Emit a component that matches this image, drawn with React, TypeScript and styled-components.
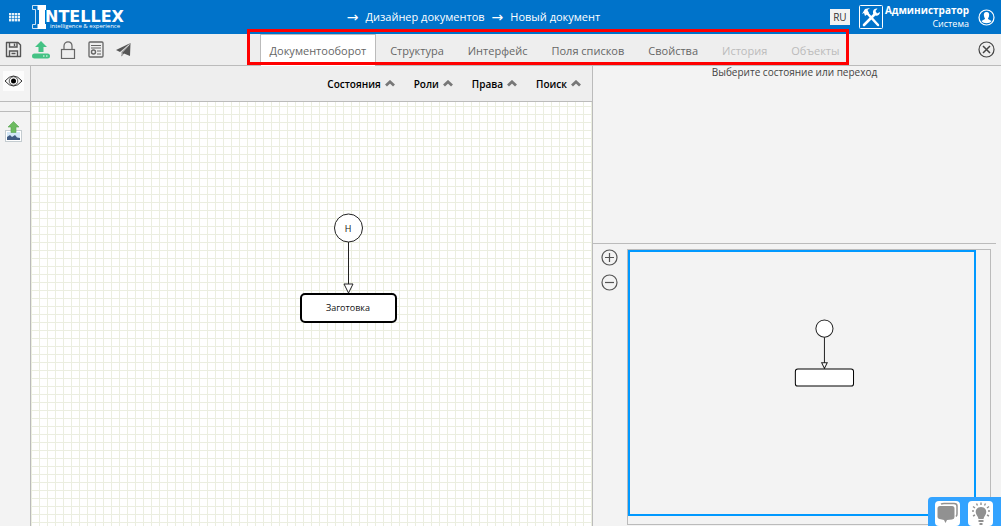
import React from 'react';
import styled, { createGlobalStyle } from 'styled-components';

const GlobalStyle = createGlobalStyle`
  *, *::before, *::after { box-sizing: border-box; }
  body {
    margin: 0;
    font-family: "Open Sans", "Noto Sans", sans-serif;
    background: #f3f3f3;
    color: #444;
  }
  button { font: inherit; color: inherit; cursor: pointer; }
  svg { display: block; flex: none; }
`;

const Page = styled.div`
  display: flex;
  flex-direction: column;
  min-height: 100vh;
`;

const Header = styled.header`
  display: flex;
  align-items: center;
  height: 34px;
  padding: 0 6px 0 8px;
  background: #0073ca;
  color: #fff;
`;

const IconButton = styled.button`
  display: flex;
  align-items: center;
  justify-content: center;
  padding: 0;
  border: 0;
  background: none;
`;

const LogoLink = styled.a`
  margin-left: 12px;
  color: #fff;
`;

const Breadcrumbs = styled.nav`
  display: flex;
  align-items: center;
  gap: 7px;
  margin: 0 auto;
  padding-right: 8px;
  font-size: 11px;
  line-height: 16px;
  font-weight: 500;
`;

const Crumb = styled.a`
  color: #fff;
  text-decoration: none;
`;

const CrumbArrow = styled.span`
  font-family: "DejaVu Sans", sans-serif;
  font-size: 14px;
  font-weight: 400;
`;

const LanguageButton = styled.button`
  width: 20px;
  height: 16px;
  padding: 0;
  border: 0;
  background: #f3f3f3;
  color: #333;
  font-size: 10px;
  line-height: 14px;
`;

const HeaderTools = styled.div`
  display: flex;
  align-items: center;
  gap: 9px;
`;

const User = styled.div`
  margin: 0 0 0 -7px;
  text-align: right;
  font-size: 9px;
  line-height: 13px;
`;

const UserName = styled.strong`
  display: block;
  font-size: 10px;
`;

const Toolbar = styled.div`
  display: flex;
  align-items: center;
  height: 32px;
  padding: 0 6px 0 4px;
  border-bottom: 1px solid #bbb;
  background: #eee;
`;

const ToolGroup = styled.div`
  display: flex;
  align-items: center;
  gap: 10px;
`;

const ToolButton = styled(IconButton)`
  justify-content: flex-start;
  width: 18px;
`;

const Tabs = styled.div`
  position: relative;
  display: flex;
  align-self: flex-start;
  gap: 4px;
  margin: 0 auto;
  padding-right: 3px;
`;

const Tab = styled.button<{ $active?: boolean }>`
  height: 32px;
  padding: 0 9px;
  border: 1px solid ${p => (p.$active ? '#bbb' : 'transparent')};
  border-bottom: 0;
  background: ${p => (p.$active ? '#fff' : 'none')};
  color: #666;
  font-size: 11px;
  line-height: 16px;
  white-space: nowrap;
  &:disabled { color: #bbb; cursor: default; }
`;

const Highlight = styled.div`
  position: absolute;
  inset: -5px 3px 1px -13px;
  border: 3px solid #f00;
  pointer-events: none;
`;

const Workspace = styled.main`
  flex: 1;
  display: grid;
  grid-template-columns: 31px minmax(0, 48fr) minmax(0, 35fr);
`;

const SideBar = styled.aside`
  border-right: 1px solid #bbb;
`;

const SideCell = styled.div<{ $height: number }>`
  display: flex;
  align-items: flex-start;
  justify-content: center;
  height: ${p => p.$height}px;
  padding: 5px 4px 0 0;
  border-bottom: 1px solid #bbb;
  &:last-child { border: 0; padding-top: 9px; }
`;

const Editor = styled.section`
  display: flex;
  flex-direction: column;
`;

const FilterBar = styled.div`
  display: flex;
  align-items: center;
  justify-content: flex-end;
  gap: 19px;
  height: 36px;
  padding: 0 11px 0 0;
  border-bottom: 1px solid #bbb;
  background: #eee;
`;

const FilterButton = styled.button`
  display: flex;
  align-items: center;
  gap: 4px;
  padding: 0;
  border: 0;
  background: none;
  color: #000;
  font-size: 10px;
  line-height: 16px;
  font-weight: 600;
`;

const Canvas = styled.div`
  flex: 1;
  background-color: #fff;
  background-image: linear-gradient(#ebeee0 1px, transparent 1px),
    linear-gradient(90deg, #ebeee0 1px, transparent 1px);
  background-size: 8px 8px;
  background-position: 0 4px;
  overflow: hidden;
`;

const Inspector = styled.aside`
  display: grid;
  grid-template-rows: minmax(0, 12fr) minmax(0, 19fr);
  padding-right: 5px;
  border-left: 1px solid #bbb;
`;

const Hint = styled.p`
  margin: 0;
  border-bottom: 1px solid #bbb;
  text-align: center;
  font-size: 10px;
  line-height: 13px;
`;

const Overview = styled.div`
  display: flex;
  gap: 9px;
  padding: 5px 5px 1px 8px;
`;

const ZoomButtons = styled.div`
  display: flex;
  flex-direction: column;
  gap: 8px;
`;

const MiniMap = styled.div`
  flex: 1;
  border: 1px solid #bbb;
`;

const Viewport = styled.div`
  width: 96%;
  height: 97%;
  border: 2px solid #0099ff;
`;

const HelpDock = styled.div`
  position: fixed;
  right: 0;
  bottom: 0;
  display: flex;
  gap: 8px;
  padding: 4px 8px 0 7px;
  border-radius: 4px 0 0 0;
  background: #33a3ff;
`;

const DockButton = styled(IconButton)`
  width: 25px;
  height: 25px;
  border-radius: 4px;
  background: #fff;
`;

const DiagramGroup = styled.g`
  fill: #fff;
  stroke: #222;
  circle, path, rect { vector-effect: non-scaling-stroke; }
`;

const Diagram = ({ labels }: { labels?: boolean }) => (
  <DiagramGroup>
    <circle cx="317.5" cy="126" r="14" />
    <path d="M317.5 140V182M313 182H322L317.5 191Z" />
    <rect x="270" y="192" width="95" height="28" rx="4" stroke="#000" strokeWidth={labels ? 2 : 1} />
    {labels && (
      <g fill="#111" stroke="none" textAnchor="middle" fontSize="9">
        <text x="317" y="130">Н</text>
        <text x="317" y="209">Заготовка</text>
      </g>
    )}
  </DiagramGroup>
);

const GridIcon = () => (
  <svg width="12" height="10" viewBox="0 0 12 10" fill="#fff" opacity=".9">
    {[0, 3, 6, 9].map(x => [0, 3, 6].map(y => (
      <rect key={`${x}-${y}`} x={x + 1} y={y + 1} width="2.400" height="2.400" />
    )))}
  </svg>
);

const Logo = () => (
  <svg width="93" height="24" viewBox="0 0 93 24" fill="#fff">
    <path d="M6 .5H.5V4.500H3.500V19.500H.5V23.500H6" fill="none" stroke="#fff" strokeWidth=".8" />
    <path d="M5.500 0H14V5H13V19H14V24H5.500V19H7V5H5.500Z" />
    <text x="13" y="17" fontFamily="DejaVu Sans" fontWeight="700" fontSize="16">NTELLEX</text>
    <text x="18" y="23" fontFamily="Open Sans" fontSize="6">intelligence &amp; experience</text>
  </svg>
);

const ToolsIcon = () => (
  <svg width="24" height="24" viewBox="0 0 24 24" fill="none" stroke="#fff">
    <rect x=".5" y=".5" width="23" height="23" rx="1" />
    <path d="M8 8L19 20" strokeWidth="2.500" strokeLinecap="round" />
    <path d="M5 20L15 10" strokeWidth="2.600" strokeLinecap="round" />
    <path d="M3 9L6 4L11 3L8.500 5L10 8L6 11L5 8Z" fill="#fff" stroke="none" />
    <path d="M18.500 3.500L16.500 6L18 8.500L21 7C21 10.500 17 12 14.500 9.500C13 6 15 3 18.500 3.500Z" fill="#fff" stroke="none" />
  </svg>
);

const UserIcon = () => (
  <svg width="17" height="17" viewBox="0 0 17 17">
    <circle cx="8.500" cy="8.500" r="7.500" fill="none" stroke="#fff" strokeWidth="1.200" />
    <path d="M8.500 3C11 3 11.500 5 11 7C10.800 8.500 10 9 10 10L13.500 12C12 15 5 15 3.500 12L7 10C7 9 6.200 8.500 6 7C5.500 5 6 3 8.500 3Z" fill="#fff" />
  </svg>
);

const SaveIcon = () => (
  <svg width="18" height="17" viewBox="-1 0 18 17" fill="none" stroke="#555" strokeWidth="1.400">
    <path d="M1.500 1.500H13L15.500 4V15.500H1.500Z" strokeLinejoin="round" />
    <path d="M4.500 1.500V6H12V1.500M9.500 2.500V5M4.500 15V10H12.500V15M6.500 12.500H10.500" />
  </svg>
);

const UploadIcon = () => (
  <svg width="18" height="18" viewBox="0 0 18 18" fill="#44c284">
    <path d="M9 0L15 6H11.500V11H6.500V6H3Z" />
    <rect y="12.500" width="18" height="5" rx="2.500" />
    <path d="M11 15H12.500M14 15H15.500" stroke="#fff" />
  </svg>
);

const LockIcon = () => (
  <svg width="16" height="18" viewBox="0 0 16 18" fill="none" stroke="#666" strokeWidth="1.200">
    <rect x="1.500" y="8.500" width="13" height="9" />
    <path d="M4 8.500V5C4 -.5 12 -.5 12 5V8.500" />
  </svg>
);

const CertificateIcon = () => (
  <svg width="16" height="17" viewBox="0 0 16 17" fill="none" stroke="#666">
    <rect x="1" y="1" width="14" height="15" rx="1" strokeWidth="1.300" />
    <path d="M3 4.500H13M3 7H13M9 10H13M9 13H13" />
    <circle cx="5.500" cy="11" r="2" strokeWidth="1.400" />
  </svg>
);

const SendIcon = () => (
  <svg width="16" height="15" viewBox="0 0 16 15" fill="#555">
    <path d="M14.500 1L0 8L4 10Z" />
    <path d="M14.500 1L5.500 10L5.500 14.500L8 11.500L14 14Z" />
    <path d="M13.500 2.500L6 10.500V13" stroke="#eee" fill="none" strokeWidth=".8" />
  </svg>
);

const CloseIcon = () => (
  <svg width="17" height="17" viewBox="0 0 17 17" fill="none" stroke="#444" strokeWidth="1.200">
    <circle cx="8.500" cy="8.500" r="7.500" />
    <path d="M5 5L12 12M12 5L5 12" strokeWidth="1.500" />
  </svg>
);

const EyeIcon = () => (
  <svg width="21" height="20" viewBox="0 0 21 20" fill="none" stroke="#333">
    <rect width="21" height="20" fill="#fcfcfc" stroke="none" />
    <path d="M2 10Q10.500 0 19 10Q10.500 20 2 10Z" />
    <circle cx="10.500" cy="10" r="4.300" strokeWidth=".8" />
    <circle cx="10.500" cy="10" r="2.500" fill="#000" stroke="none" />
  </svg>
);

const ImageUploadIcon = () => (
  <svg width="17" height="21" viewBox="0 0 17 21">
    <rect x=".5" y="9.500" width="16" height="11" fill="#fff" stroke="#c4ccd0" />
    <rect x="2" y="11" width="13" height="8" fill="#d3e7f7" />
    <path d="M2 19V16L5 14L7 16L10 14L12 16.500L15 17V19Z" fill="#405b82" />
    <path d="M8.500 .5L14 6H11V11.500H6V6H3Z" fill="#6dbb60" stroke="#58a552" strokeWidth=".6" />
  </svg>
);

const Caret = () => (
  <svg width="10" height="7" viewBox="0 0 10 7" fill="none" stroke="#777" strokeWidth="2.800">
    <path d="M1 5.500L5 1.800L9 5.500" />
  </svg>
);

const ZoomIcon = ({ plus }: { plus?: boolean }) => (
  <svg width="17" height="17" viewBox="0 0 17 17" fill="none" stroke="#555" strokeWidth="1.200">
    <circle cx="8.500" cy="8.500" r="7.500" />
    <path d={plus ? 'M4 8.500H13M8.500 4V13' : 'M4 8.500H13'} />
  </svg>
);

const ChatIcon = () => (
  <svg width="25" height="25" viewBox="0 0 25 25" fill="#919191">
    <path d="M6 3.200Q7 2.500 9 2.500H19Q22 2.500 22 5V13Q22 14.500 21 15.500" fill="none" stroke="#919191" strokeWidth="1.500" />
    <path d="M5 5H17Q19.500 5 19.500 7.500V16Q19.500 18 17 18.500L12 19L10.500 22L9 19L4.500 18Q2.500 17.500 2.500 16V7.500Q2.500 5 5 5Z" />
  </svg>
);

const BulbIcon = () => (
  <svg width="25" height="25" viewBox="0 0 25 25" fill="#919191">
    <path d="M13 6C17 6 19 9 18 12.500C17.500 14.500 16 15.500 15.500 18H10.500C10 15.500 8.500 14.500 8 12.500C7 9 9 6 13 6Z" />
    <path d="M10.500 19H15.500V21H10.500ZM11.500 22H14.500V24H11.500Z" />
    <path d="M13 1.500V4M8.500 2.500L9.500 4.500M17.500 2.500L16.500 4.500M5 5.500L7 7M21 5.500L19 7M4 10H6M20 10H22M5 15L7 14M21 15L19 14" stroke="#919191" strokeWidth="1.400" />
  </svg>
);

const actions = [
  { name: 'Сохранить', Icon: SaveIcon },
  { name: 'Выгрузить', Icon: UploadIcon },
  { name: 'Заблокировать', Icon: LockIcon },
  { name: 'Сертификат', Icon: CertificateIcon },
  { name: 'Отправить', Icon: SendIcon },
];

const tabs = [
  { label: 'Документооборот', active: true },
  { label: 'Структура' },
  { label: 'Интерфейс' },
  { label: 'Поля списков' },
  { label: 'Свойства' },
  { label: 'История', disabled: true },
  { label: 'Объекты', disabled: true },
];

const filters = ['Состояния', 'Роли', 'Права', 'Поиск'];

export default function App() {
  return (
    <Page>
      <GlobalStyle />
      <Header>
        <IconButton aria-label="Меню"><GridIcon /></IconButton>
        <LogoLink href="#" aria-label="Intellex"><Logo /></LogoLink>
        <Breadcrumbs>
          <CrumbArrow>→</CrumbArrow>
          <Crumb href="#designer">Дизайнер документов</Crumb>
          <CrumbArrow>→</CrumbArrow>
          <Crumb href="#new">Новый документ</Crumb>
        </Breadcrumbs>
        <HeaderTools>
          <LanguageButton>RU</LanguageButton>
          <IconButton aria-label="Настройки"><ToolsIcon /></IconButton>
          <User>
            <UserName>Администратор</UserName>
            Система
          </User>
          <IconButton aria-label="Профиль"><UserIcon /></IconButton>
        </HeaderTools>
      </Header>
      <Toolbar>
        <ToolGroup>
          {actions.map(({ name, Icon }) => (
            <ToolButton key={name} aria-label={name}><Icon /></ToolButton>
          ))}
        </ToolGroup>
        <Tabs role="tablist">
          {tabs.map(t => (
            <Tab key={t.label} role="tab" aria-selected={!!t.active} $active={t.active} disabled={t.disabled}>
              {t.label}
            </Tab>
          ))}
          <Highlight />
        </Tabs>
        <IconButton aria-label="Закрыть"><CloseIcon /></IconButton>
      </Toolbar>
      <Workspace>
        <SideBar>
          <SideCell $height={36}><IconButton aria-label="Просмотр"><EyeIcon /></IconButton></SideCell>
          <SideCell $height={10} />
          <SideCell $height={40}><IconButton aria-label="Загрузить изображение"><ImageUploadIcon /></IconButton></SideCell>
        </SideBar>
        <Editor>
          <FilterBar>
            {filters.map(f => (
              <FilterButton key={f}>{f}<Caret /></FilterButton>
            ))}
          </FilterBar>
          <Canvas>
            <svg width="400" height="240"><Diagram labels /></svg>
          </Canvas>
        </Editor>
        <Inspector>
          <Hint>Выберите состояние или переход</Hint>
          <Overview>
            <ZoomButtons>
              <IconButton aria-label="Увеличить"><ZoomIcon plus /></IconButton>
              <IconButton aria-label="Уменьшить"><ZoomIcon /></IconButton>
            </ZoomButtons>
            <MiniMap>
              <Viewport>
                <svg width="100%" height="100%" viewBox="0 1 561 424" preserveAspectRatio="xMinYMin">
                  <Diagram />
                </svg>
              </Viewport>
            </MiniMap>
          </Overview>
        </Inspector>
      </Workspace>
      <HelpDock>
        <DockButton aria-label="Чат"><ChatIcon /></DockButton>
        <DockButton aria-label="Подсказки"><BulbIcon /></DockButton>
      </HelpDock>
    </Page>
  );
}
